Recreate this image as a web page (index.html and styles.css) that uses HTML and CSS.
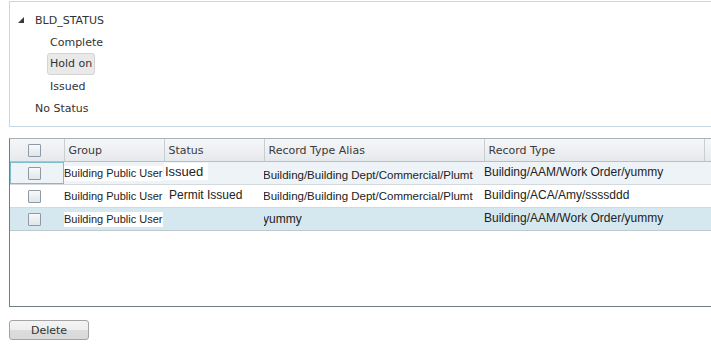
FILE: index.html
```html
<!DOCTYPE html>
<html lang="en">
<head>
  <meta charset="UTF-8">
  <title>Status Mapping</title>
  <link rel="stylesheet" href="styles.css">
</head>
<body>
  <div class="tree">
    <div class="node root">
      <svg class="arrow" width="6" height="6" viewBox="0 0 6 6"><polygon points="6,0 6,6 0,6" fill="#3a3a3a"/></svg>
      BLD_STATUS
    </div>
    <div class="node child">Complete</div>
    <div class="node child"><span class="sel">Hold on</span></div>
    <div class="node child">Issued</div>
    <div class="node">No Status</div>
  </div>

  <div class="grid">
    <table>
      <colgroup>
        <col class="c-check">
        <col class="c-group">
        <col class="c-status">
        <col class="c-alias">
        <col class="c-type">
        <col>
      </colgroup>
      <thead>
        <tr>
          <th><span class="box"></span></th>
          <th>Group</th>
          <th>Status</th>
          <th>Record Type Alias</th>
          <th>Record Type</th>
          <th></th>
        </tr>
      </thead>
      <tbody>
        <tr class="alt">
          <td class="focus"><span class="box"></span></td>
          <td><span class="group">Building Public User</span></td>
          <td><span class="status big">Issued</span></td>
          <td class="low"><span class="alias">Building/Building Dept/Commercial/Plumt</span></td>
          <td><span class="type">Building/AAM/Work Order/yummy</span></td>
          <td></td>
        </tr>
        <tr>
          <td><span class="box"></span></td>
          <td><span class="group">Building Public User</span></td>
          <td><span class="status">Permit Issued</span></td>
          <td><span class="alias">Building/Building Dept/Commercial/Plumt</span></td>
          <td><span class="type">Building/ACA/Amy/ssssddd</span></td>
          <td></td>
        </tr>
        <tr class="selected">
          <td><span class="box"></span></td>
          <td><span class="group">Building Public User</span></td>
          <td></td>
          <td><span class="alias wide">yummy</span></td>
          <td><span class="type">Building/AAM/Work Order/yummy</span></td>
          <td></td>
        </tr>
      </tbody>
    </table>
  </div>

  <button class="delete">Delete</button>
</body>
</html>
```

FILE: styles.css
```css
html, body {
  margin: 0;
  overflow: hidden;
}

body {
  background: white;
  font-family: "DejaVu Sans", Verdana, sans-serif;
  font-size: 11px;
  color: #333;
  padding-left: 9px;
  width: 720px;
}

.tree {
  margin-top: 1px;
  height: 110px;
  padding: 7px 0;
  border: 1px solid #c6d7e5;
  border-right: none;
}

.node {
  display: flex;
  align-items: center;
  height: 22px;
  padding-left: 25px;
  white-space: nowrap;
}

.root {
  padding-left: 8px;
}

.arrow {
  margin-right: 11px;
}

.child {
  padding-left: 40px;
}

.sel {
  display: inline-block;
  height: 20px;
  line-height: 20px;
  margin-left: -3px;
  padding: 0 2px;
  background: #e9e9e9;
  border: 1px solid #d3d3d3;
  border-radius: 3px;
}

.grid {
  margin-top: 11px;
  height: 167px;
  border-top: 1px solid #a9b2ba;
  border-left: 1px solid #6f7f89;
  border-bottom: 1px solid #6f7f89;
}

table {
  border-collapse: collapse;
  table-layout: fixed;
  width: 711px;
}

.c-check { width: 54px; }
.c-group { width: 100px; }
.c-status { width: 100px; }
.c-alias { width: 220px; }
.c-type { width: 220px; }

th {
  height: 22px;
  padding: 0 0 0 4px;
  text-align: left;
  font-weight: normal;
  color: #3a3a3a;
  background: linear-gradient(#f5f6f8, #e6e9ec);
  border-right: 1px solid #c8cdd2;
  border-bottom: 1px solid #b8c0c6;
}

th:first-child {
  padding-left: 18px;
}

td {
  height: 22px;
  padding: 0;
  border-bottom: 1px solid #d3d9dd;
  overflow: hidden;
  white-space: nowrap;
  font-family: "Liberation Sans", Arial, sans-serif;
  color: #222;
}

td:first-child {
  padding-left: 18px;
}

tr.alt td {
  background: #eef3f7;
}

tr.selected td {
  background: #d6e8ef;
  border-bottom-color: #bfc8cd;
}

td.focus {
  box-shadow: inset 0 0 0 1px #7cbccb;
}

.box {
  display: block;
  width: 11px;
  height: 11px;
  border: 1px solid #8d99a4;
  border-radius: 1px;
  background: linear-gradient(#f7f9fa, #e2e6ea);
}

.group {
  display: inline-block;
  font-size: 11px;
  line-height: 15px;
  padding-right: 1px;
  background: white;
}

.status {
  display: inline-block;
  padding-left: 5px;
  font-size: 12px;
  margin-bottom: 2px;
}

.status.big {
  font-size: 13px;
  line-height: 17px;
  padding: 0 5px 0 1px;
  background: white;
  margin-bottom: 3px;
}

.alias {
  display: inline-block;
  font-size: 11.5px;
  line-height: 16px;
  margin-left: -1px;
  padding-right: 6px;
}

tr:not(.alt) .alias {
  background: white;
}

tr.selected .alias {
  background: none;
}

.alias.wide {
  font-size: 12px;
}

td.low .alias {
  margin-top: 3px;
}

.type {
  font-size: 12px;
  margin-bottom: 2px;
  display: inline-block;
}

.delete {
  display: block;
  margin-top: 13px;
  width: 80px;
  height: 20px;
  padding: 0;
  font-family: "DejaVu Sans", Verdana, sans-serif;
  font-size: 11px;
  color: #333;
  border: 1px solid #a3a3a3;
  border-radius: 3px;
  background: linear-gradient(#f4f4f4 0, #eeeeee 50%, #dddddd 50%, #d8d8d8 100%);
  cursor: pointer;
}
```
